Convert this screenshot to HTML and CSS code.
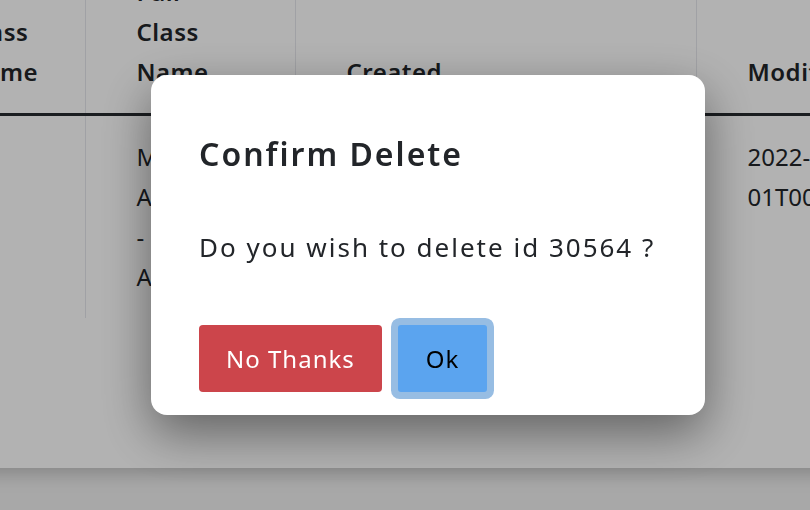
FILE: index.html
```html
<!DOCTYPE html>
<html>
<head>
<meta charset="utf-8">
<link rel="stylesheet" href="styles.css">
</head>
<body>
<div class="page">
  <div class="card">
    <table class="grid">
      <colgroup>
        <col class="w1">
        <col class="w2">
        <col class="w3">
        <col class="w4">
      </colgroup>
      <thead>
        <tr>
          <th>Class Name</th>
          <th>Full Class Name</th>
          <th>Created</th>
          <th>Modified</th>
        </tr>
      </thead>
      <tbody>
        <tr>
          <td></td>
          <td>Manager Administration - Accounts</td>
          <td>2022-01-01T00:00:00</td>
          <td>2022-01-01T00:00:00</td>
        </tr>
      </tbody>
    </table>
  </div>
</div>
<div class="overlay"></div>
<div class="modal">
  <h2 class="modal-title">Confirm Delete</h2>
  <p class="modal-text">Do you wish to delete id 30564 ?</p>
  <div class="modal-actions">
    <button class="btn btn-danger">No Thanks</button>
    <button class="btn btn-primary btn-focus">Ok</button>
  </div>
</div>
</body>
</html>
```
FILE: styles.css
```css
html, body {
  margin: 0;
  padding: 0;
  width: 810px;
  height: 510px;
  overflow: hidden;
  background: #f1f1f1;
  font-family: "Noto Sans", sans-serif;
  color: #212529;
}
.page {
  margin-left: -85px;
  margin-top: -28px;
}
.card {
  background: #fff;
  height: 496px;
  width: 1100px;
  box-shadow: 0 5px 18px rgba(0,0,0,0.22);
}
.grid {
  border-collapse: collapse;
  table-layout: fixed;
  width: 1031px;
  font-size: 24px;
  line-height: 40px;
}
.w1 { width: 170px; }
.w2 { width: 210px; }
.w3 { width: 401px; }
.w4 { width: 250px; }
.grid th {
  font-weight: 600;
  letter-spacing: 0.5px;
  text-align: left;
  vertical-align: bottom;
  padding: 0 70px 21px 51px;
  border-bottom: 3px solid #262a2e;
}
.grid td {
  vertical-align: top;
  padding: 21px 70px 21px 51px;
  word-break: normal;
}
.grid th + th, .grid td + td {
  border-left: 1px solid #e6e7ec;
}
.overlay {
  position: fixed;
  inset: 0;
  background: rgba(0,0,0,0.3);
}
.modal {
  position: fixed;
  left: 151px;
  top: 75px;
  width: 554px;
  height: 340px;
  box-sizing: border-box;
  background: #fff;
  border-radius: 16px;
  padding: 0 48px;
  box-shadow: 0 18px 50px rgba(0,0,0,0.45);
  display: flex;
  flex-direction: column;
}
.modal-title {
  margin: 57px 0 0 0;
  font-size: 32px;
  font-weight: 600;
  letter-spacing: 2px;
  line-height: 44px;
  color: #222529;
}
.modal-text {
  margin: 53px 0 0 0;
  font-size: 26px;
  letter-spacing: 2px;
  line-height: 36px;
  color: #222529;
  white-space: nowrap;
}
.modal-actions {
  margin-top: 60px;
  display: flex;
  gap: 16px;
}
.btn {
  font-family: inherit;
  font-size: 24px;
  letter-spacing: 1px;
  height: 67px;
  padding: 0 27px;
  border: none;
  border-radius: 4px;
}
.btn-danger {
  background: #cc454b;
  color: #fff;
}
.btn-primary {
  background: #5ba4ef;
  color: #000;
  padding: 0 28px;
}
.btn-focus {
  box-shadow: 0 0 0 7px #97bde3;
  border-radius: 3px;
}
```
